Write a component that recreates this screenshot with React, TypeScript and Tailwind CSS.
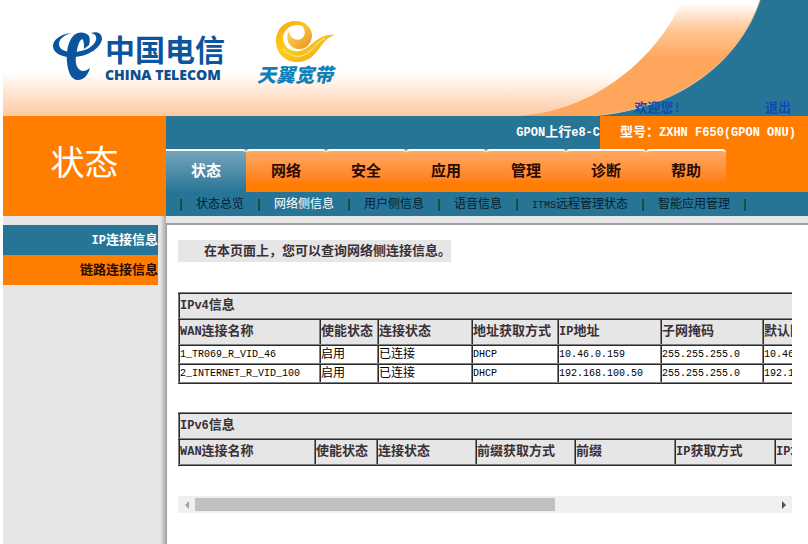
import { clsx } from "clsx";

const tabs = ["状态", "网络", "安全", "应用", "管理", "诊断", "帮助"];

const subMenu = ["状态总览", "网络侧信息", "用户侧信息", "语音信息", "ITMS远程管理状态", "智能应用管理"];

const sideMenu = ["IP连接信息", "链路连接信息"];

const ipv4 = {
    title: "IPv4信息",
    columns: [
        { name: "WAN连接名称", width: "w-[141px]" },
        { name: "使能状态", width: "w-[58px]" },
        { name: "连接状态", width: "w-[94px]" },
        { name: "地址获取方式", width: "w-[86px]" },
        { name: "IP地址", width: "w-[103px]" },
        { name: "子网掩码", width: "w-[102px]" },
        { name: "默认网关", width: "w-[103px]" },
        { name: "DNS服务器", width: "w-[313px]" },
    ],
    rows: [
        ["1_TR069_R_VID_46", "启用", "已连接", "DHCP", "10.46.0.159", "255.255.255.0", "10.46.0.1", ""],
        ["2_INTERNET_R_VID_100", "启用", "已连接", "DHCP", "192.168.100.50", "255.255.255.0", "192.168.100.1", ""],
    ],
};

const ipv6 = {
    title: "IPv6信息",
    columns: [
        { name: "WAN连接名称", width: "w-[136px]" },
        { name: "使能状态", width: "w-[62px]" },
        { name: "连接状态", width: "w-[99px]" },
        { name: "前缀获取方式", width: "w-[99px]" },
        { name: "前缀", width: "w-[100px]" },
        { name: "IP获取方式", width: "w-[100px]" },
        { name: "IP地址", width: "w-[404px]" },
    ],
    rows: [] as string[][],
};

// Latin runs are set one step smaller so that they sit at half the width of a Chinese character
function Mixed({ text, small = false }: { text: string; small?: boolean }) {
    return (
        <>
            {text.split(/([\x20-\x7e]+)/).filter(Boolean).map((part, i) =>
                /^[\x20-\x7e]/.test(part) ? (
                    <span key={i} className={small ? "text-[10px]" : "text-[12px]"}>
                        {part}
                    </span>
                ) : (
                    part
                )
            )}
        </>
    );
}

function TelecomLogo() {
    return (
        <svg width="176" height="56" viewBox="50 28 176 56" role="img" aria-label="China Telecom">
            <g fill="#0b559f">
                <path d="M72 33C60 34 53 40 53 46C53 53 62 58 74 57C90 56 101 47 102 39C102 34 98 31 91 33C95 34 97 36 96 40C94 47 84 52 73 52C64 52 59 49 59 44C59 39 64 35 72 33Z" />
                <path d="M89 36C86 32 79 31 74 35C68 41 66 52 67 62C68 72 71 80 78 80C84 80 88 75 90 68C86 71 83 72 80 70C75 67 75 58 77 50C78 45 79 41 82 39C84 40 84 44 84 49L89 45C90 42 90 39 89 36Z" />
            </g>
            <text
                x="105"
                y="61"
                fill="#0b559f"
                fontSize="30"
                fontWeight="700"
                fontFamily="'Noto Sans CJK SC', sans-serif"
            >
                中国电信
            </text>
            <text x="105" y="80" fill="#0b4f92" fontSize="14" fontWeight="800" fontFamily="'Open Sans', sans-serif">
                CHINA TELECOM
            </text>
        </svg>
    );
}

function TianyiLogo() {
    return (
        <svg width="84" height="68" viewBox="256 18 84 68" role="img" aria-label="天翼宽带">
            <defs>
                <linearGradient id="gold" x1="0" y1="0" x2="1" y2="1">
                    <stop offset="0" stopColor="#f5a21b" />
                    <stop offset="0.4" stopColor="#fdd017" />
                    <stop offset="1" stopColor="#f3a01a" />
                </linearGradient>
                <linearGradient id="core" x1="0" y1="0" x2="1" y2="1">
                    <stop offset="0" stopColor="#fde06a" />
                    <stop offset="1" stopColor="#ee8f14" />
                </linearGradient>
            </defs>
            <path
                d="M312 36C312 27 305 21 295 21C284 21 276 30 276 41C276 53 285 62 297 62C309 62 315 55 321 46C325 40 329 37 335 35C327 34 320 37 313 43C306 49 301 52 295 51C287 50 283 44 283 37C284 30 290 25 297 25C304 25 309 29 312 36Z"
                fill="url(#gold)"
            />
            <path
                d="M289 31C285 38 288 47 297 49C305 50 311 45 312 36C312 30 307 25 301 25C306 29 306 36 301 39C297 41 290 39 289 31Z"
                fill="url(#core)"
            />
            <path d="M283 49C289 57 301 59 309 52C316 46 319 41 325 38" fill="none" stroke="#fff3a8" strokeWidth="1" />
            <text
                x="257"
                y="82"
                fill="#0f80b8"
                fontSize="19"
                fontWeight="900"
                fontStyle="italic"
                fontFamily="'Noto Sans CJK SC', sans-serif"
            >
                天翼宽带
            </text>
        </svg>
    );
}

function HeaderSwoosh() {
    return (
        <svg width="308" height="116" viewBox="500 0 308 116" className="block" aria-hidden="true">
            <defs>
                <linearGradient id="band" x1="0" y1="0" x2="0" y2="116" gradientUnits="userSpaceOnUse">
                    <stop offset="0.03" stopColor="#ffffff" />
                    <stop offset="0.25" stopColor="#ffc897" />
                    <stop offset="0.5" stopColor="#ffa65d" />
                    <stop offset="1" stopColor="#ffa65d" />
                </linearGradient>
            </defs>
            <path d="M682 0C668 36 615 108 520 116H590C680 110 740 60 760 0Z" fill="url(#band)" />
            <path d="M760 0C740 60 680 110 590 116H808V0Z" fill="#277596" />
            <path d="M760 0C740 60 680 110 590 116" fill="none" stroke="#e3c4a0" strokeWidth="1" />
        </svg>
    );
}

type InfoTableProps = typeof ipv4;

function InfoTable({ title, columns, rows }: InfoTableProps) {
    return (
        <table className="w-[1000px] table-fixed border-collapse border-2 border-[#808080] text-left [border-style:ridge]">
            <colgroup>
                {columns.map((column) => (
                    <col key={column.name} className={column.width} />
                ))}
            </colgroup>
            <thead className="bg-[#e6e6e6] text-[13px] leading-6 text-[#3a3036]">
                <tr>
                    <th colSpan={columns.length} className="border-2 border-[#808080] p-0 [border-style:ridge]">
                        <Mixed text={title} />
                    </th>
                </tr>
                <tr>
                    {columns.map((column) => (
                        <th
                            key={column.name}
                            className="overflow-hidden border-2 border-[#808080] p-0 whitespace-nowrap [border-style:ridge]"
                        >
                            <Mixed text={column.name} />
                        </th>
                    ))}
                </tr>
            </thead>
            <tbody className="text-xs leading-4 text-black">
                {rows.map((row) => (
                    <tr key={row[0]}>
                        {row.map((cell, i) => (
                            <td key={i} className="border-2 border-[#808080] p-0 whitespace-nowrap [border-style:ridge]">
                                <Mixed text={cell} small />
                            </td>
                        ))}
                    </tr>
                ))}
            </tbody>
        </table>
    );
}

export default function App() {
    return (
        <div className="flex min-h-screen flex-col bg-white pl-[3px] font-['Liberation_Mono','Noto_Sans_CJK_SC',monospace]">
            <header className="relative flex h-[116px] justify-between bg-linear-to-b from-white from-62% to-[#fdc9a1]">
                <div className="flex items-start">
                    <div className="pt-7 pl-[47px]">
                        <TelecomLogo />
                    </div>
                    <div className="pt-[18px] pl-[30px]">
                        <TianyiLogo />
                    </div>
                </div>
                <HeaderSwoosh />
                <div className="absolute right-[17px] -bottom-px flex gap-[84px] text-[13px] leading-4 font-bold text-[#0f4bb0]">
                    <span>欢迎您!</span>
                    <a href="#logout">退出</a>
                </div>
            </header>

            <div className="flex h-[100px]">
                <h1 className="flex w-[163px] shrink-0 items-center justify-center bg-[#ff7d00] text-[34px] text-white">
                    状态
                </h1>
                <div className="flex min-w-0 grow flex-col bg-[#277596]">
                    <div className="flex h-[33px] justify-end text-[13px] leading-[34px] font-bold whitespace-nowrap text-white">
                        <p>
                            <Mixed text="GPON上行e8-C" />
                        </p>
                        <p className="w-[208px] bg-[#ff7d00] pl-5">
                            <Mixed text="型号：ZXHN F650(GPON ONU)" />
                        </p>
                    </div>
                    <nav className="flex bg-[#ff7d00]">
                        {tabs.map((tab, i) => (
                            <a
                                key={tab}
                                href="#tab"
                                className={clsx(
                                    "h-[43px] w-20 border-t-2 border-white bg-linear-to-b text-center text-[15px] leading-[43px] font-bold",
                                    i === 0
                                        ? "rounded-tr-sm from-[#75a5bb] to-[#277596] text-white"
                                        : "rounded-t-sm from-[#ffa860] to-[#ff7d00] to-80% text-[#2a0a00]"
                                )}
                            >
                                {tab}
                            </a>
                        ))}
                    </nav>
                    <nav className="flex text-xs leading-[26px] whitespace-nowrap text-[#06202c]">
                        <span className="w-[30px] text-center">|</span>
                        {subMenu.map((item, i) => (
                            <div key={item} className="flex">
                                <a href="#page" className={clsx(i === 1 && "text-white")}>
                                    <Mixed text={item} small />
                                </a>
                                <span className="w-[30px] text-center">|</span>
                            </div>
                        ))}
                    </nav>
                </div>
            </div>

            <div className="flex grow bg-[#e6e6e6]">
                <aside className="flex w-[163px] shrink-0">
                    <nav className="grow pt-[9px] text-right text-[13px] font-bold">
                        {sideMenu.map((item, i) => (
                            <a
                                key={item}
                                href="#side"
                                className={clsx(
                                    "block h-[30px] leading-8",
                                    i === 0 ? "bg-[#277596] text-white" : "bg-[#ff7d00] text-[#2a0a00]"
                                )}
                            >
                                <Mixed text={item} />
                            </a>
                        ))}
                    </nav>
                    <div className="w-2 bg-linear-to-r from-[#e6e6e6] from-30% to-[#a8a8a8]" />
                </aside>
                <main className="mt-[7px] min-w-0 grow border-t-2 border-l border-[#a0a0a0] bg-white pt-[15px] pr-4 pl-[11px]">
                    <p className="h-[22px] w-fit bg-[#e6e6e6] pl-[26px] text-[13px] leading-6 font-bold text-[#3a3036]">
                        在本页面上，您可以查询网络侧连接信息。
                    </p>
                    <div className="mt-[30px] flex flex-col gap-7 overflow-hidden">
                        <InfoTable {...ipv4} />
                        <InfoTable {...ipv6} />
                    </div>
                    <div className="mt-[30px] flex h-[17px] items-center bg-[#f0f0f0]">
                        <button type="button" aria-label="向左滚动" className="flex w-[17px] justify-center">
                            <svg width="4" height="8" viewBox="0 0 4 8">
                                <path d="M4 0V8L0 4Z" fill="#a3a3a3" />
                            </svg>
                        </button>
                        <div className="grow">
                            <div className="h-[13px] w-[62%] bg-[#c1c1c1]" />
                        </div>
                        <button type="button" aria-label="向右滚动" className="flex w-[17px] justify-center">
                            <svg width="4" height="8" viewBox="0 0 4 8">
                                <path d="M0 0V8L4 4Z" fill="#505050" />
                            </svg>
                        </button>
                    </div>
                </main>
            </div>
        </div>
    );
}
